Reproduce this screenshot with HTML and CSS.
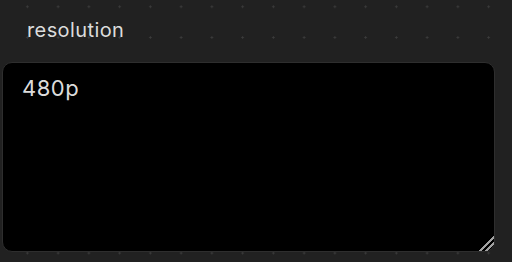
FILE: index.html
```html
<!DOCTYPE html>
<html>
<head>
<meta charset="utf-8">
<link rel="stylesheet" href="styles.css">
</head>
<body>
<div class="field">
  <label class="label" for="res">resolution</label>
  <textarea id="res" class="input">480p</textarea>
</div>
</body>
</html>
```
FILE: styles.css
```css
html, body {
  margin: 0;
  padding: 0;
  width: 512px;
  height: 262px;
  overflow: hidden;
}
html {
  color-scheme: dark;
}
body {
  background-color: #212121;
  background-image: radial-gradient(circle, #3c3c3c 0.9px, transparent 1.3px);
  background-size: 30.75px 30.8px;
  background-position: 12px -8.7px;
  font-family: Inter, "Noto Sans", sans-serif;
}
.field {
  display: flex;
  flex-direction: column;
  padding: 16px 0 0 1.5px;
}
.label {
  color: #dcdcdc;
  font-size: 20px;
  line-height: 28px;
  letter-spacing: 0.4px;
  padding-left: 25.5px;
  margin-bottom: 18px;
}
.input {
  box-sizing: border-box;
  width: 493.5px;
  height: 190px;
  background: #000;
  border: 1px solid #2e2e2e;
  border-radius: 10px;
  color: #dcdcdc;
  font-family: Inter, "Noto Sans", sans-serif;
  font-size: 22px;
  line-height: 28px;
  letter-spacing: 0.5px;
  padding: 11px 19.5px;
  margin: 0;
  outline: none;
  resize: both;
}
.input::-webkit-resizer {
  background-color: transparent;
  background-image: linear-gradient(135deg,
    transparent 49%, #a0a0a0 49%, #a0a0a0 57%, transparent 57%,
    transparent 69%, #a0a0a0 69%, #a0a0a0 77%, transparent 77%);
}
```
